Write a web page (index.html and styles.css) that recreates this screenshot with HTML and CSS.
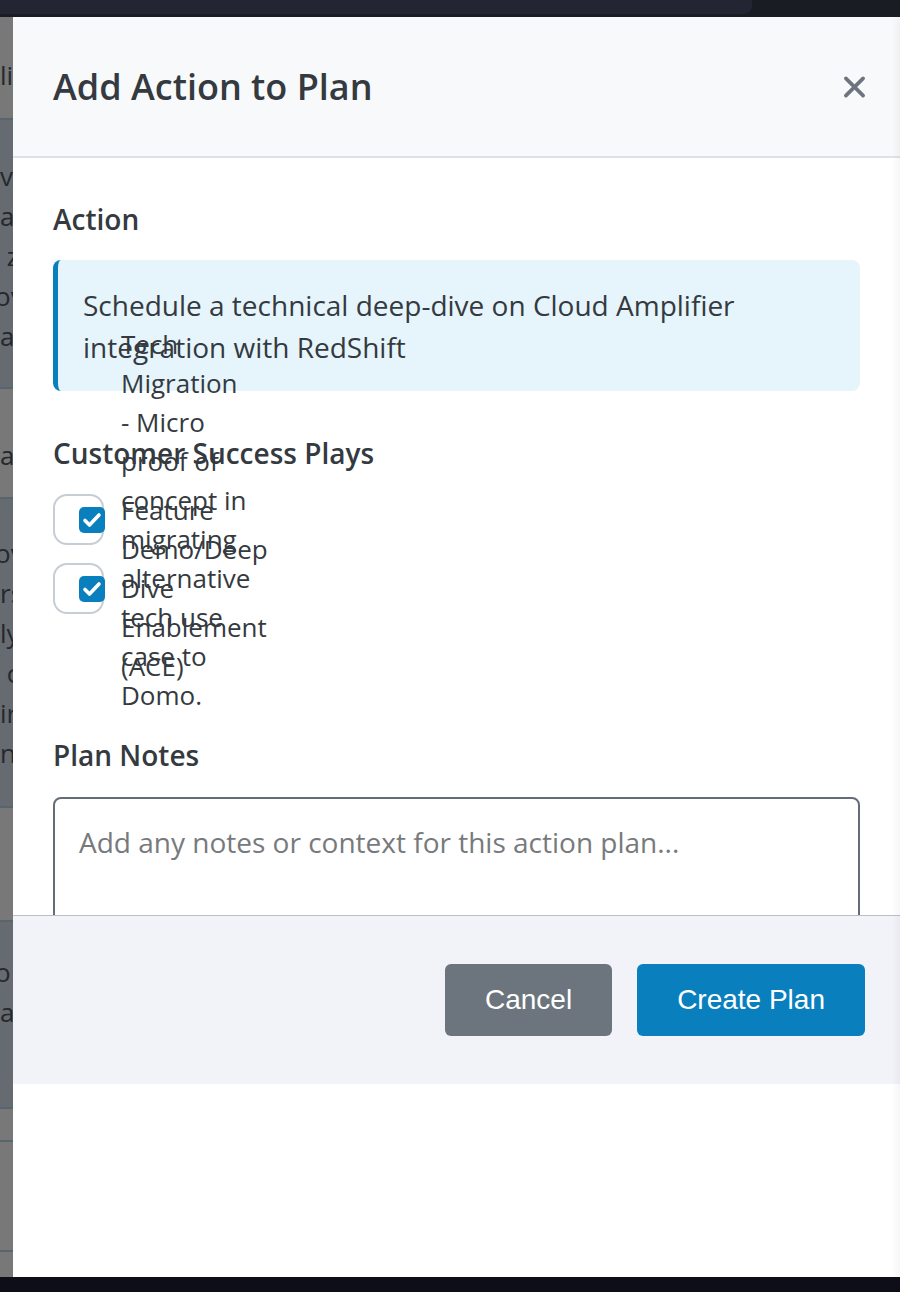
FILE: index.html
```html
<!DOCTYPE html>
<html lang="en">
<head>
<meta charset="utf-8">
<title>Add Action to Plan</title>
<link rel="stylesheet" href="styles.css">
</head>
<body>
<div class="chrome-top"><div class="chrome-tab"></div></div>
<div class="stage">
  <div class="backdrop">
    <div class="band gray h101"><div class="frag pt38">li</div></div>
    <div class="sep"></div>
    <div class="band blue h267">
      <div class="frag pt36">ve</div>
      <div class="frag">at</div>
      <div class="frag">&nbsp;z</div>
      <div class="frag cut">ov</div>
      <div class="frag">at</div>
    </div>
    <div class="sep"></div>
    <div class="band gray h108"><div class="frag pt46">at</div></div>
    <div class="sep"></div>
    <div class="band blue h307">
      <div class="frag pt34 cut">ov</div>
      <div class="frag">rs</div>
      <div class="frag">ly</div>
      <div class="frag">&nbsp;c</div>
      <div class="frag">ir</div>
      <div class="frag">n,</div>
    </div>
    <div class="sep"></div>
    <div class="band gray h112"></div>
    <div class="sep"></div>
    <div class="band blue h185">
      <div class="frag pt30 cut">o</div>
      <div class="frag">ac</div>
    </div>
    <div class="sep"></div>
    <div class="band gray h31"></div>
    <div class="sep"></div>
    <div class="band gray h108"></div>
    <div class="sep"></div>
    <div class="band gray fill"></div>
  </div>

  <div class="modal">
    <div class="modal-header">
      <h2 class="modal-title">Add Action to Plan</h2>
      <button class="close" aria-label="Close">
        <svg width="24" height="24" viewBox="0 0 24 24"><path d="M3 3 L21 21 M21 3 L3 21" stroke="#6c757d" stroke-width="3.8" stroke-linecap="round" fill="none"/></svg>
      </button>
    </div>

    <div class="modal-body">
      <div class="label">Action</div>
      <div class="action-box">Schedule a technical deep-dive on Cloud Amplifier integration with RedShift</div>

      <div class="label mt-section">Customer Success Plays</div>
      <div class="plays">
        <div class="play">
          <span class="pill"><span class="cb"><svg width="26" height="26" viewBox="0 0 26 26"><path d="M6 13.5 L10.5 18 L20 8" stroke="#fff" stroke-width="3.6" stroke-linecap="round" stroke-linejoin="round" fill="none"/></svg></span></span>
          <span class="play-text narrow">Tech Migration - Micro proof of concept in migrating alternative tech use case to Domo.</span>
        </div>
        <div class="play">
          <span class="pill"><span class="cb"><svg width="26" height="26" viewBox="0 0 26 26"><path d="M6 13.5 L10.5 18 L20 8" stroke="#fff" stroke-width="3.6" stroke-linecap="round" stroke-linejoin="round" fill="none"/></svg></span></span>
          <span class="play-text">Feature Demo/Deep Dive Enablement (ACE)</span>
        </div>
      </div>

      <div class="label mt-notes">Plan Notes</div>
      <textarea class="notes" placeholder="Add any notes or context for this action plan..."></textarea>
    </div>

    <div class="modal-footer">
      <button class="btn btn-cancel">Cancel</button>
      <button class="btn btn-primary">Create Plan</button>
    </div>
  </div>
</div>
<div class="chrome-bottom"></div>
</body>
</html>
```

FILE: styles.css
```css
* { box-sizing: border-box; }
html, body { margin: 0; padding: 0; }
body {
  width: 900px;
  height: 1292px;
  overflow: hidden;
  background: #0e0e18;
  font-family: "Open Sans", "Noto Sans", sans-serif;
  color: #343a40;
}

.chrome-top {
  height: 17px;
  background: #1a1c24;
}
.chrome-tab {
  width: 752px;
  height: 14px;
  background: #232632;
  border-bottom-right-radius: 8px;
}
.chrome-bottom {
  height: 15px;
  background: #0e0e18;
}

.stage {
  display: flex;
  height: 1260px;
}

/* dimmed page behind the modal */
.backdrop {
  width: 13px;
  flex: none;
  overflow: hidden;
  display: flex;
  flex-direction: column;
}
.band { flex: none; overflow: hidden; }
.band.gray { background: #787878; }
.band.blue { background: #656b71; }
.band.fill { flex: 1; }
.h101 { height: 101px; }
.h267 { height: 267px; }
.h108 { height: 108px; }
.h307 { height: 307px; }
.h112 { height: 112px; }
.h185 { height: 185px; }
.h31 { height: 31px; }
.sep { height: 2px; flex: none; background: #58646e; }
.frag {
  font-size: 26px;
  line-height: 40px;
  white-space: nowrap;
  color: #25282c;
}
.frag.cut { margin-left: -5px; }
.pt30 { padding-top: 30px; }
.pt34 { padding-top: 34px; }
.pt36 { padding-top: 36px; }
.pt38 { padding-top: 38px; }
.pt46 { padding-top: 46px; }

/* modal */
.modal {
  flex: 1;
  background: #fff;
  display: flex;
  flex-direction: column;
  position: relative;
}
.modal::after {
  content: "";
  position: absolute;
  top: 0;
  right: 0;
  bottom: 0;
  width: 8px;
  background: linear-gradient(to right, rgba(0,0,0,0), rgba(0,0,0,0.035));
  pointer-events: none;
}

.modal-header {
  height: 141px;
  flex: none;
  background: #f8f9fb;
  border-bottom: 2px solid #dee1e6;
  display: flex;
  align-items: center;
  justify-content: space-between;
  padding: 0 34px 0 40px;
}
.modal-title {
  margin: 0;
  font-size: 36px;
  font-weight: 600;
  color: #343a40;
}
.close {
  border: 0;
  background: none;
  padding: 0;
  width: 23px;
  height: 24px;
  display: flex;
  align-items: center;
  justify-content: center;
}

.modal-body {
  height: 757px;
  flex: none;
  overflow: hidden;
  padding: 42px 40px 0;
}
.label {
  font-size: 28px;
  font-weight: 600;
  color: #343a40;
}
.mt-section { margin-top: 43px; }
.mt-notes { margin-top: 122px; }

.action-box {
  margin-top: 22px;
  background: #e6f4fb;
  border-left: 5px solid #0a7fbd;
  border-radius: 8px;
  padding: 24px 24px 23px 25px;
  font-size: 28px;
  line-height: 42px;
  color: #343a40;
}

.plays {
  margin-top: 22px;
  display: flex;
  flex-direction: column;
  gap: 18px;
}
.play {
  height: 51px;
  display: flex;
  align-items: center;
}
.pill {
  flex: none;
  width: 51px;
  height: 51px;
  border: 2px solid #c6cdd4;
  border-radius: 14px;
  padding-left: 24px;
  display: flex;
  align-items: center;
}
.cb {
  flex: none;
  width: 26px;
  height: 26px;
  border-radius: 5px;
  background: #0a7fbd;
  display: flex;
}
.play-text {
  flex: none;
  width: 150px;
  margin-left: 17px;
  font-size: 26px;
  line-height: 39px;
  color: #343a40;
}
.play-text.narrow { width: 129px; }

.notes {
  display: block;
  margin-top: 23px;
  width: 100%;
  height: 170px;
  border: 2px solid #646c76;
  border-radius: 8px;
  padding: 22px 24px;
  font-family: "Open Sans", "Noto Sans", sans-serif;
  font-size: 28px;
  line-height: 42px;
  color: #343a40;
  resize: none;
  background: #fff;
}
.notes::placeholder { color: #777a7d; }

.modal-footer {
  flex: none;
  background: #f2f3f8;
  border-top: 1px solid #b8c0ca;
  padding: 48px 35px 48px;
  display: flex;
  justify-content: flex-end;
  gap: 25px;
}
.btn {
  font-family: "Liberation Sans", Arial, sans-serif;
  font-size: 28px;
  line-height: 32px;
  color: #fff;
  border: 0;
  border-radius: 6px;
  padding: 20px 40px;
}
.btn-cancel { background: #6c757d; }
.btn-primary { background: #0a7fbd; }
```
